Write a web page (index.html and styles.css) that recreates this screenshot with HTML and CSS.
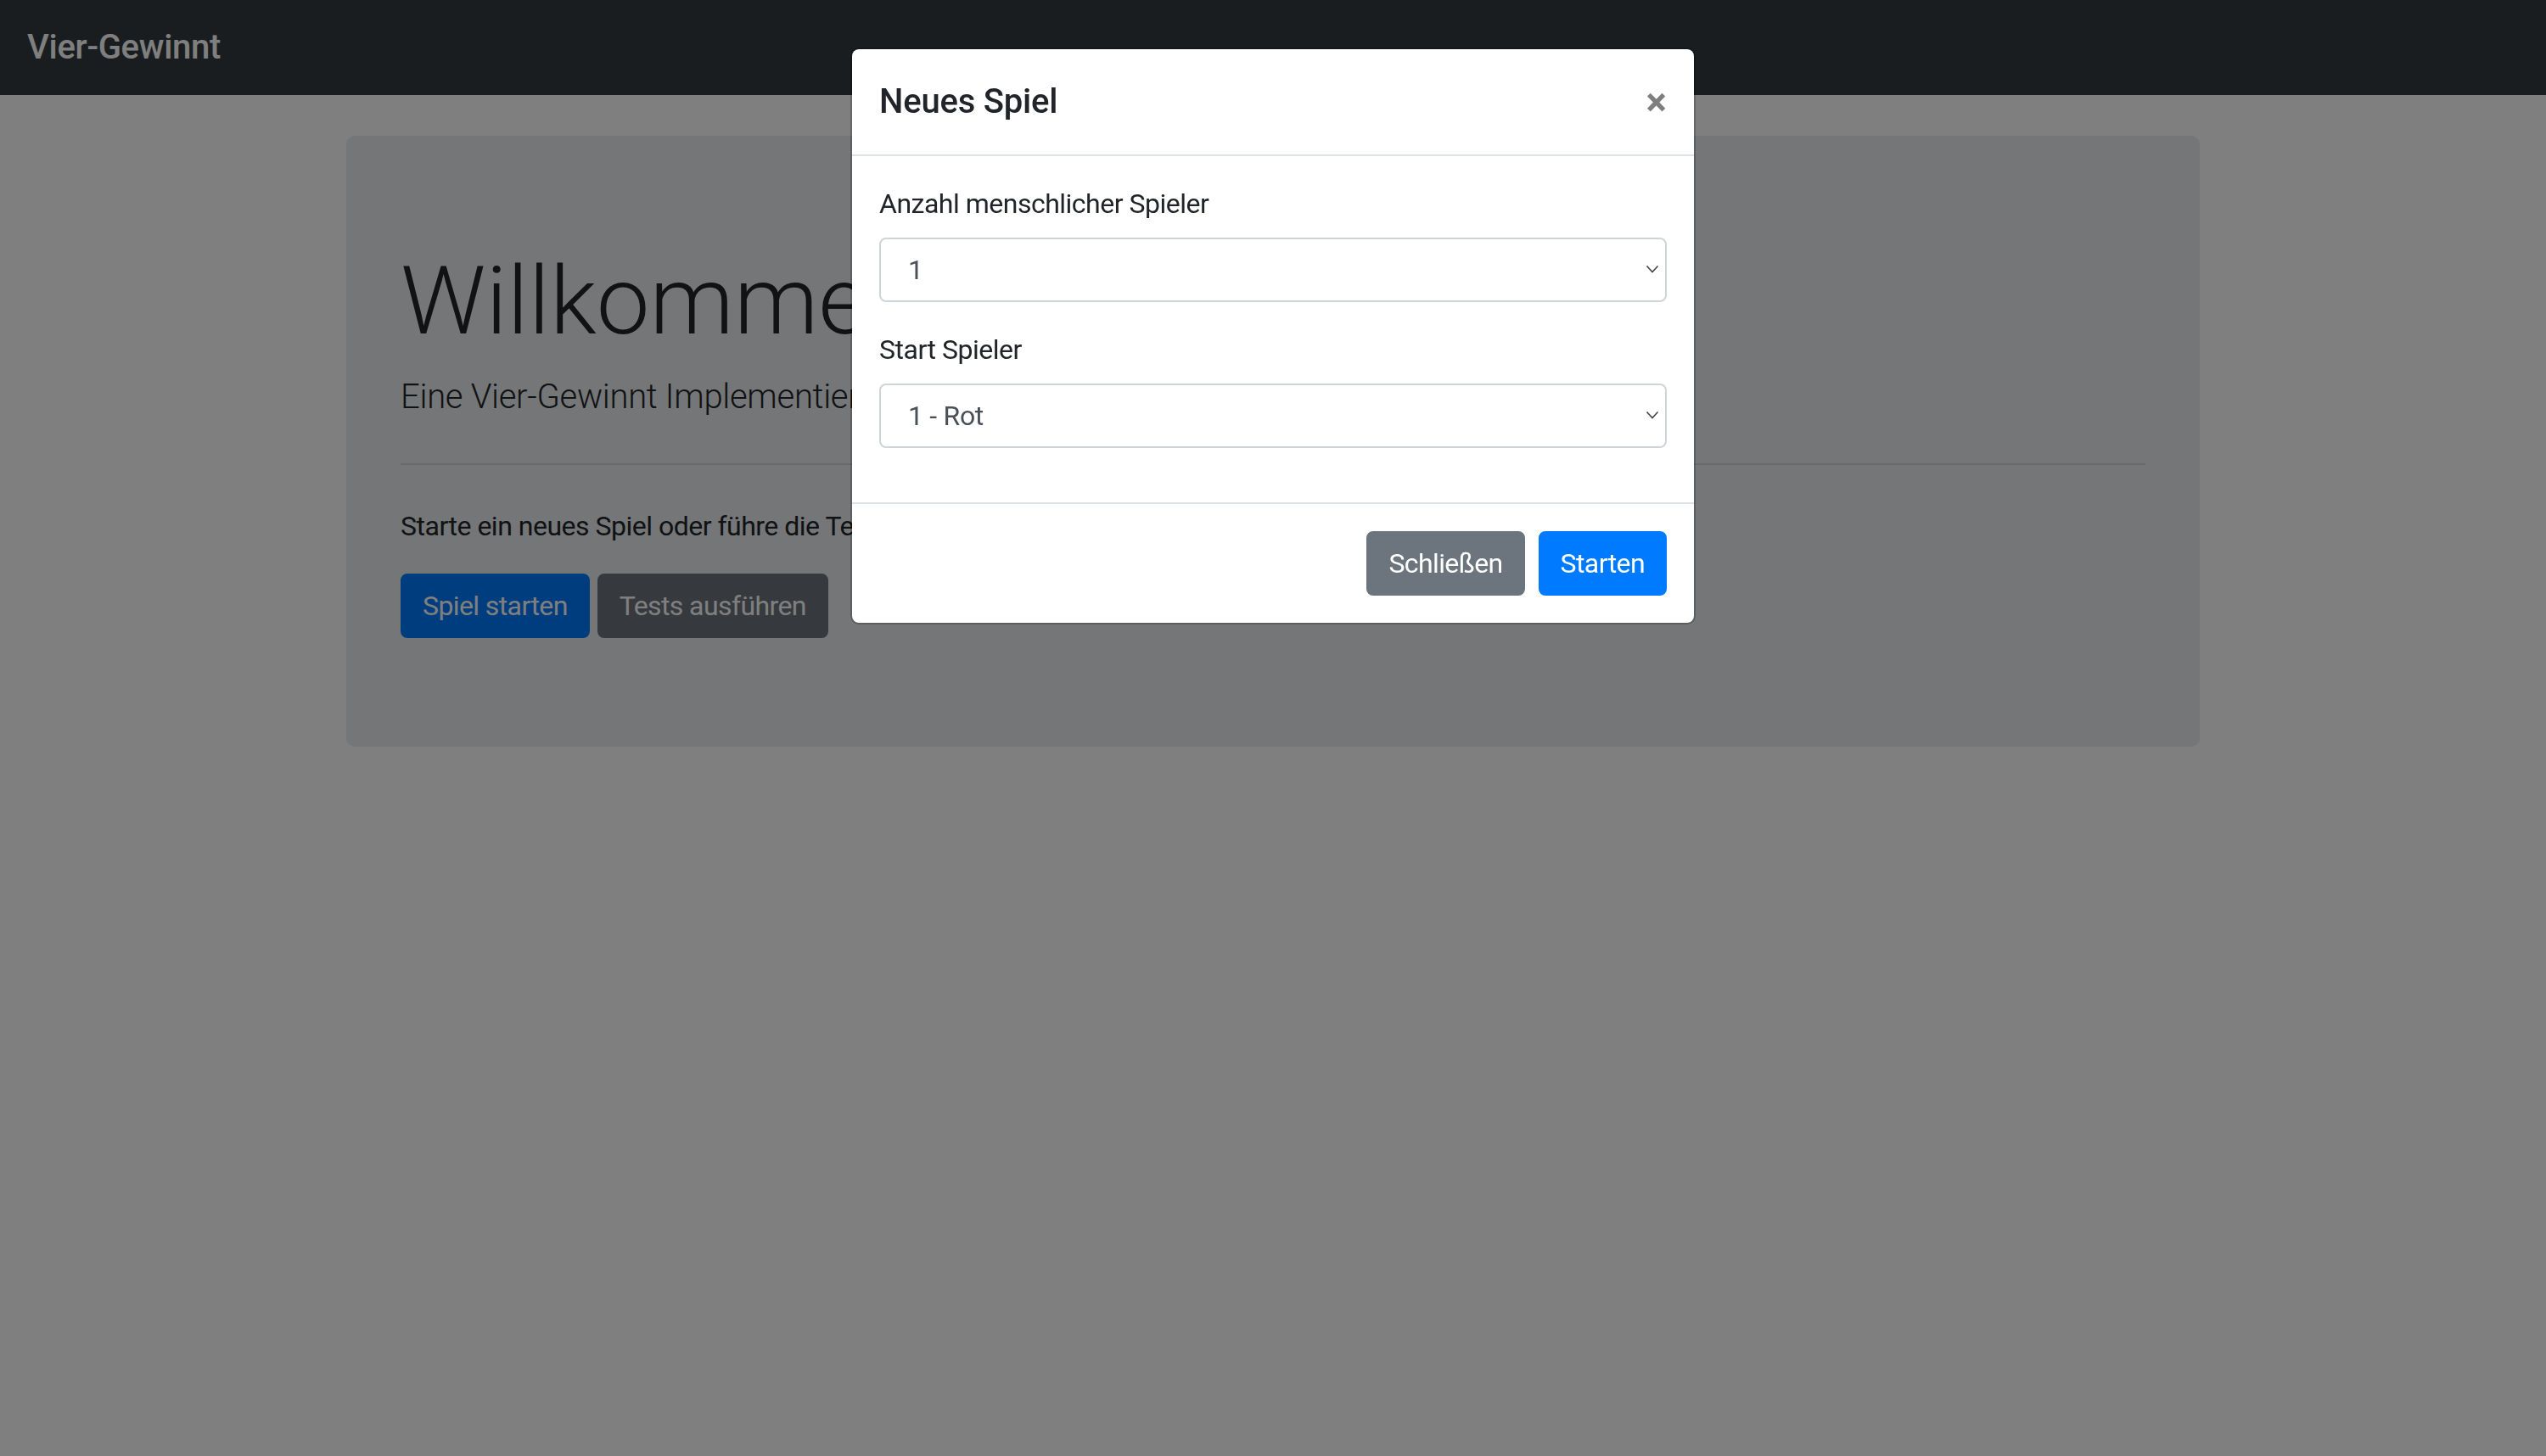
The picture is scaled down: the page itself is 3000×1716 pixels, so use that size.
FILE: index.html
```html
<!DOCTYPE html>
<html lang="de">
<head>
<meta charset="utf-8">
<title>Vier-Gewinnt</title>
<link rel="stylesheet" href="styles.css">
</head>
<body>
<nav class="navbar">
  <a class="navbar-brand" href="#">Vier-Gewinnt</a>
</nav>
<main class="container">
  <section class="jumbotron">
    <h1 class="display-4">Willkommen!</h1>
    <p class="lead">Eine Vier-Gewinnt Implementierung in JavaScript.</p>
    <hr class="divider">
    <p class="intro">Starte ein neues Spiel oder führe die Tests aus.</p>
    <div class="actions">
      <a class="btn btn-primary" href="#">Spiel starten</a>
      <a class="btn btn-secondary" href="#">Tests ausführen</a>
    </div>
  </section>
</main>

<div class="modal-backdrop"></div>
<div class="modal">
  <div class="modal-dialog">
    <div class="modal-content">
      <div class="modal-header">
        <h5 class="modal-title">Neues Spiel</h5>
        <button type="button" class="close" aria-label="Close"><span>&times;</span></button>
      </div>
      <div class="modal-body">
        <div class="form-group">
          <label class="form-label" for="players">Anzahl menschlicher Spieler</label>
          <div class="select-wrap">
            <select id="players" class="form-control">
              <option>1</option>
              <option>2</option>
              <option>0</option>
            </select>
            <svg class="chevron" width="16" height="10" viewBox="0 0 16 10"><path d="M1.5 1.5 L8 8.5 L14.5 1.5" fill="none" stroke="#444" stroke-width="1.6"/></svg>
          </div>
        </div>
        <div class="form-group">
          <label class="form-label" for="start">Start Spieler</label>
          <div class="select-wrap">
            <select id="start" class="form-control">
              <option>1 - Rot</option>
              <option>2 - Gelb</option>
            </select>
            <svg class="chevron" width="16" height="10" viewBox="0 0 16 10"><path d="M1.5 1.5 L8 8.5 L14.5 1.5" fill="none" stroke="#444" stroke-width="1.6"/></svg>
          </div>
        </div>
      </div>
      <div class="modal-footer">
        <button type="button" class="btn btn-secondary">Schließen</button>
        <button type="button" class="btn btn-primary">Starten</button>
      </div>
    </div>
  </div>
</div>
</body>
</html>
```
FILE: styles.css
```css
* { box-sizing: border-box; }

html, body { height: 100%; }

body {
  margin: 0;
  font-family: "Segoe UI", Roboto, "Liberation Sans", sans-serif;
  font-size: 32px;
  line-height: 1.5;
  letter-spacing: -0.5px;
  color: #212529;
  background: #fff;
  overflow: hidden;
}

.navbar {
  display: flex;
  align-items: center;
  background: #343a40;
  padding: 16px 32px;
}

.navbar-brand {
  font-size: 40px;
  font-weight: 500;
  line-height: 60px;
  padding: 10px 0;
  color: #fff;
  text-decoration: none;
  letter-spacing: -0.3px;
}

.container {
  width: 2184px;
  margin: 48px auto 0;
}

.jumbotron {
  background: #e9ecef;
  border-radius: 10px;
  padding: 128px 64px;
}

.display-4 {
  margin: 0 0 16px;
  font-size: 112px;
  font-weight: 300;
  line-height: 1.2;
  letter-spacing: 0;
}

.lead {
  margin: 0 0 32px;
  font-size: 40px;
  font-weight: 300;
  line-height: 60px;
  letter-spacing: -0.3px;
}

.divider {
  margin: 48px 0;
  border: 0;
  border-top: 2px solid rgba(0, 0, 0, 0.1);
}

.intro {
  margin: 0 0 32px;
}

.actions {
  display: flex;
  gap: 9px;
}

.btn {
  display: inline-block;
  font-family: inherit;
  font-size: 32px;
  line-height: 48px;
  letter-spacing: -0.6px;
  padding: 12px 24px;
  border: 2px solid transparent;
  border-radius: 8px;
  color: #fff;
  text-decoration: none;
  cursor: pointer;
}

.btn-primary { background: #007bff; border-color: #007bff; }
.btn-secondary { background: #6c757d; border-color: #6c757d; }

.modal-backdrop {
  position: fixed;
  inset: 0;
  background: rgba(0, 0, 0, 0.5);
}

.modal {
  position: fixed;
  inset: 0;
}

.modal-dialog {
  width: 996px;
  margin: 56px auto;
}

.modal-content {
  background: #fff;
  border: 2px solid rgba(0, 0, 0, 0.2);
  border-radius: 10px;
  background-clip: padding-box;
}

.modal-header {
  display: flex;
  align-items: flex-start;
  justify-content: space-between;
  padding: 32px;
  border-bottom: 2px solid #dee2e6;
}

.modal-title {
  margin: 0;
  font-size: 40px;
  font-weight: 500;
  line-height: 60px;
  letter-spacing: -0.2px;
  color: #212529;
}

.close {
  padding: 39px 32px 25px;
  margin: -32px -32px -32px auto;
  background: transparent;
  border: 0;
  font-family: inherit;
  font-size: 46px;
  font-weight: 700;
  line-height: 1;
  color: #000;
  opacity: 0.5;
  text-shadow: 0 2px 0 #fff;
  cursor: pointer;
}

.modal-body {
  padding: 32px;
}

.form-group {
  margin-bottom: 32px;
}

.form-label {
  display: inline-block;
  margin-bottom: 16px;
}

.select-wrap {
  position: relative;
}

.form-control {
  display: block;
  width: 100%;
  height: 76px;
  padding: 12px 24px 12px 32px;
  font-family: inherit;
  font-size: 32px;
  line-height: 48px;
  letter-spacing: -0.3px;
  color: #495057;
  background: #fff;
  border: 2px solid #ced4da;
  border-radius: 8px;
  appearance: none;
  -webkit-appearance: none;
}

.chevron {
  position: absolute;
  right: 9px;
  top: 32px;
  pointer-events: none;
}

.modal-footer {
  display: flex;
  align-items: center;
  justify-content: flex-end;
  padding: 24px;
  border-top: 2px solid #dee2e6;
}

.modal-footer .btn {
  margin: 8px;
}
```
